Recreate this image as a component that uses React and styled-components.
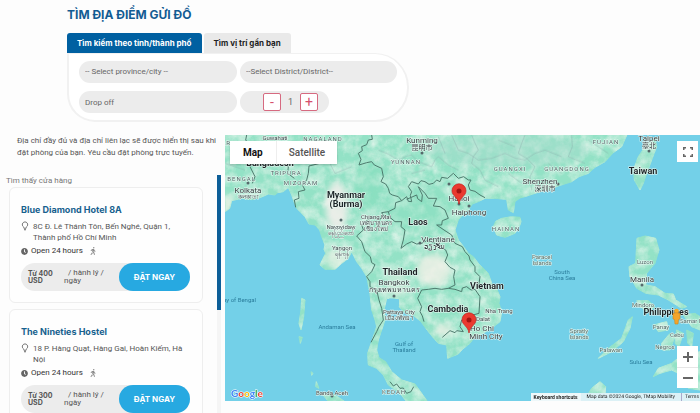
import { useState } from "react";
import styled, { createGlobalStyle, css } from "styled-components";
import { FaClock, FaWalking } from "react-icons/fa";

const stores = [
  {
    id: 1,
    name: "Blue Diamond Hotel 8A",
    address: "8C Đ. Lê Thánh Tôn, Bến Nghé, Quận 1, Thành phố Hồ Chí Minh",
    price: "Từ 400 USD",
  },
  {
    id: 2,
    name: "The Nineties Hostel",
    address: "18 P. Hàng Quạt, Hàng Gai, Hoàn Kiếm, Hà Nội",
    price: "Từ 300 USD",
  },
];

// kind, x, y, text, anchor
const labels = [
  ["country", 121, 60, "Myanmar"],
  ["country", 121, 69, "(Burma)"],
  ["country", 193, 87, "Laos"],
  ["country", 175, 137, "Thailand"],
  ["country", 223, 174, "Cambodia"],
  ["country", 262, 151, "Vietnam"],
  ["country", 418, 36, "Taiwan"],
  ["country", 441, 177, "Philippines"],
  ["country", 45, 28, "Bangladesh"],
  ["city", 197, 5, "Kunming"],
  ["native", 197, 13, "昆明市"],
  ["city", 315, 46, "Shenzhen"],
  ["native", 320, 54, "深圳市"],
  ["city", 424, 3, "Taipei"],
  ["native", 424, 11, "臺北"],
  ["city", 234, 63, "Hanoi"],
  ["city", 244, 77, "Haiphong"],
  ["city", 213, 104, "Vientiane"],
  ["native", 209, 112, "ວຽງຈັນ"],
  ["city", 169, 147, "Bangkok"],
  ["native", 169, 155, "กรุงเทพมหานคร"],
  ["city", 257, 193, "Ho Chi"],
  ["city", 261, 201, "Minh City"],
  ["city", 417, 144, "Manila"],
  ["city", 23, 55, "Kolkata"],
  ["town", 23, 61, "কলকাতা"],
  ["town", 50, 2, "Guwahati"],
  ["town", 151, 81, "Chiang Mai"],
  ["town", 151, 87, "เทศบาลนคร"],
  ["town", 151, 93, "เชียงใหม่"],
  ["town", 116, 91, "Naypyidaw"],
  ["town", 116, 97, "နေပြည်တော်"],
  ["town", 117, 112, "Yangon"],
  ["town", 117, 118, "ရန်ကုန်"],
  ["town", 174, 176, "Pattaya City"],
  ["town", 174, 182, "เมืองพัทยา"],
  ["town", 274, 175, "Nha Trang"],
  ["town", 258, 183, "Dalat"],
  ["town", 107, 257, "Banda Aceh"],
  ["island", 317, 121, "Paracel"],
  ["island", 317, 127, "Islands"],
  ["island", 354, 195, "Spratly"],
  ["island", 354, 201, "Islands"],
  ["island", 420, 126, "Luzon"],
  ["island", 418, 169, "Mindoro"],
  ["island", 436, 191, "Panay"],
  ["island", 452, 199, "Cebu"],
  ["island", 455, 185, "Samar Island", "start"],
  ["island", 440, 211, "Negros"],
  ["island", 386, 214, "Palawan"],
  ["region", 181, 26, "YUNNAN"],
  ["region", 285, 33, "GUANGXI"],
  ["region", 342, 33, "GUANGDONG"],
  ["region", 381, 6, "FUJIAN"],
  ["region", 281, 93, "HAINAN"],
  ["region", 98, 3, "NAGALAND"],
  ["region", 61, 37, "TRIPURA"],
  ["region", 76, 47, "MIZORAM"],
  ["region", 31, 43, "WEST BENGAL", "end"],
  ["region", 6, 7, "BIHAR", "end"],
  ["region", 169, 256, "KEDAH"],
  ["sea", 31, 164, "Bay of Bengal", "end"],
  ["sea", 112, 191, "Andaman Sea"],
  ["sea", 179, 208, "Gulf of"],
  ["sea", 179, 214, "Thailand"],
  ["sea", 337, 136, "South"],
  ["sea", 337, 142, "China Sea"],
  ["sea", 416, 226, "Sulu Sea"],
];

const land = [
  // mainland
  "M0 0V245L14 235 20 212 50 205 80 209 105 203 130 192 150 195 158 188 175 185 190 172 200 195 208 218 215 235 240 260 252 282 270 285 284 300 290 320 300 345 297 358 302 370 285 405 300 418 330 418 350 400 370 385 380 365 395 395 410 415 425 440 435 490 440 540 450 570 455 590 445 620 428 670 430 705 455 715 475 735 490 765 525 790 545 815H608L590 790 570 762 530 750 500 725 482 695 462 683 455 660 460 630 470 600 480 570 478 535 485 505 520 508 522 530 540 550 565 556 588 575 600 592 622 620 640 640 665 645 668 685 700 672 712 658 735 640 750 620 770 612 800 595 825 575 830 545 822 520 825 500 815 475 800 460 790 430 760 400 745 380 730 370 712 345 700 330 690 300 700 270 718 250 730 240 742 222 760 215 780 205 810 205 845 208 850 240 865 248 870 215 885 204 900 200 930 190 960 180 980 176 1000 168 1040 155 1062 140 1090 130 1110 112 1140 95 1165 68 1190 50 1212 0Z",
  // hainan, taiwan
  "M805 290L812 274 830 265 860 260 885 262 888 275 885 285 870 310 840 322 815 315Z",
  "M1245 180L1228 150 1225 120 1240 80 1260 50 1290 25 1295 50 1280 90 1265 130 1255 160Z",
  // philippines
  "M1236 325L1260 318 1292 325 1302 360 1290 400 1265 430 1262 465 1290 470 1320 490 1345 492 1352 510 1385 530 1370 535 1330 510 1300 495 1262 490 1235 475 1215 440 1212 410 1232 400Z",
  "M1235 512L1270 512 1290 530 1270 545 1245 530Z M1375 555L1410 550 1425 560V600L1400 590Z M1285 585L1325 575 1330 600 1300 605Z M1310 640L1335 610 1350 620 1335 660 1312 660Z M1355 600L1375 610 1362 650 1350 640Z M1385 600L1405 610 1400 650 1388 640Z",
  "M1120 685L1150 655 1190 625 1210 570 1222 560 1215 595 1195 635 1160 665Z",
  "M1285 740L1300 715 1340 700 1365 680 1425 665V780L1390 775 1380 740 1340 720 1305 730Z",
  // borneo, sumatra, andaman
  "M1075 815L1100 775 1125 755 1142 770 1140 792 1165 815Z",
  "M290 790L330 795 360 815H310Z M230 505L240 510 236 560 228 600 222 580 228 540Z M222 620L232 622 226 640Z M258 725L264 730 260 736Z M274 755L282 775 272 770Z",
];

const borders = [
  "M440 15L442 28 430 30 425 44 410 50 412 62 400 70 408 88 402 105 425 98 440 95 448 105 470 115 475 140 468 155 482 162 490 175 494 190 502 195 520 200 530 212 545 200 550 214 560 215 556 196 560 185 550 170 560 155 580 162 588 152 600 155 612 163 625 160 635 150 645 155 650 142 668 145 685 130 700 145 716 140 730 150 738 150 730 165 735 180 750 184 765 195 780 203",
  "M530 212L512 218 510 235 490 245 470 248 478 262 462 268 440 262 428 270 410 285 415 300 395 318 410 335 420 365 436 380 440 398 450 404 440 425 425 440 435 455 435 470 455 480 462 510 470 535 475 570 462 590 455 605 438 637",
  "M545 208L575 195 578 206 590 215 592 195 580 170 600 190 610 205 635 205 625 228 645 230 660 240 670 265 652 272 650 285 635 285 660 302 680 315 690 340 712 350 720 365 732 378 735 390 750 410 750 425 765 440 760 475",
  "M490 245L495 262 510 275 530 275 528 290 540 300 535 330 528 355 545 342 560 335 575 342 590 340 605 332 620 335 640 345 662 360 668 375 660 395 675 412 690 420 686 440 690 465 670 475 690 478 710 485 712 474 725 470 738 480 750 478",
  "M597 575L592 558 585 545 590 530 578 505 590 480 610 478 630 475 650 478 670 475 M750 478L765 500 762 550 740 556 725 572 710 570 705 590 715 605 695 602 690 608 675 602 652 622",
  "M285 100L252 108 250 130 245 150 232 165 240 180 220 185 222 205 208 210 212 232 M65 15L62 30 75 45 72 60 82 90 75 110 90 140 82 160 M180 100L190 110 188 130 208 145",
  "M495 755L505 768 515 762 525 775 535 774 545 790 558 785 566 770",
];

const dots = [[197, 18], [224, 49], [424, 16], [234, 69], [244, 71], [116, 85], [195, 108], [169, 161], [417, 150], [23, 48], [107, 261], [333, 49]];

const provinceLines =
  "M460 60L490 72 520 90 545 78 560 75 580 95 620 110 630 90 640 80 670 105 700 120 M740 15L748 35 760 60 745 80 740 100 765 120 780 150 820 170 M900 15L890 40 880 70 905 85 930 110 915 140 920 180 M1040 15L1042 50 1030 80 1080 100 M680 15L700 60 730 70 760 90 800 85 840 70 870 84 900 90 930 70 960 60 1010 80 M640 20L660 70 M820 30L870 50 M970 100L1010 130 M1090 30L1150 70 M560 130L600 120 M850 130L890 160 M300 70L330 130 380 110 M0 100L60 120 M110 60L160 80";

function StoreMap() {
  return (
    <MapDrawing viewBox="0 0 475 266" preserveAspectRatio="xMinYMin slice" role="img" aria-label="Map of stores">
      <defs>
        <filter id="relief" x="0" y="0" width="100%" height="100%" colorInterpolationFilters="sRGB">
          <feTurbulence type="fractalNoise" baseFrequency="0.03" numOctaves="5" seed="8" result="noise" />
          <feColorMatrix in="noise" type="matrix" values="0 0 0 0 0.84  0 0 0 0 0.95  0 0 0 0 0.9  1.8 0 0 0 -0.6" result="light" />
          <feComposite in="light" in2="SourceAlpha" operator="in" result="shade" />
          <feMerge>
            <feMergeNode in="SourceGraphic" />
            <feMergeNode in="shade" />
          </feMerge>
        </filter>
        <filter id="soft">
          <feGaussianBlur stdDeviation="10" />
        </filter>
        <clipPath id="coast">
          <path d={land[0]} />
        </clipPath>
      </defs>
      <rect width="475" height="266" fill="#73d0e8" />
      <g transform="translate(0 -5) scale(.33333)">
        <g filter="url(#relief)" fill="#93e2c6" stroke="#93e2c6" strokeWidth="3">
          {land.map((d) => <path key={d} d={d} strokeLinejoin="round" />)}
        </g>
        <g clipPath="url(#coast)">
          <g filter="url(#soft)">
            <ellipse cx="335" cy="230" rx="34" ry="75" fill="#f0eeea" opacity=".9" />
            <ellipse cx="335" cy="385" rx="35" ry="30" fill="#edf2e6" opacity=".7" />
            <ellipse cx="625" cy="420" rx="52" ry="48" fill="#eef0e6" opacity=".85" />
            <ellipse cx="515" cy="460" rx="35" ry="40" fill="#dceee0" opacity=".6" />
            <ellipse cx="655" cy="600" rx="25" ry="20" fill="#eef0e6" opacity=".8" />
            <ellipse cx="5" cy="225" rx="20" ry="30" fill="#edf2e6" opacity=".8" />
            <ellipse cx="580" cy="240" rx="110" ry="60" fill="#86dfbf" opacity=".4" />
            <ellipse cx="430" cy="160" rx="40" ry="80" fill="#7edcb8" opacity=".4" />
            <ellipse cx="850" cy="60" rx="240" ry="50" fill="#a5dccb" opacity=".5" />
          </g>
          <path d={provinceLines} fill="none" stroke="#8caaa8" strokeWidth="2" opacity=".6" />
        </g>
        <path d="M493 505L522 508 522 530 494 527Z" fill="#73d0e8" />
        {borders.map((d) => (
          <path key={d} d={d} fill="none" stroke="#4d7a6d" strokeWidth="3" strokeLinejoin="round" />
        ))}
      </g>
      {dots.map(([x, y]) => (
        <circle key={`${x}-${y}`} cx={x} cy={y} r="1.5" fill="#56696b" />
      ))}
      {labels.map(([kind, x, y, text, anchor = "middle"]) => (
        <MapLabel key={`${x}-${y}`} $kind={kind} x={x} y={y} textAnchor={anchor}>{text}</MapLabel>
      ))}
      <Marker x={234} y={69} />
      <Marker x={244} y={198} />
      <g transform="translate(451.500 182)">
        <circle cy="-6" r="2.300" fill="#f7a928" />
        <path d="M-3.500-3.500Q0-5 3.500-3.500L3.500 2 2 2.500 1.500 7H-1.500L-2 2.500-3.500 2Z" fill="#f3a52c" stroke="#d58819" strokeWidth=".6" />
      </g>
      <GoogleMark x="6" y="262">
        <tspan fill="#4285f4">G</tspan>
        <tspan fill="#ea4335">o</tspan>
        <tspan fill="#fbbc05">o</tspan>
        <tspan fill="#4285f4">g</tspan>
        <tspan fill="#34a853">l</tspan>
        <tspan fill="#ea4335">e</tspan>
      </GoogleMark>
    </MapDrawing>
  );
}

function Marker({ x, y }) {
  return (
    <g transform={`translate(${x} ${y})`}>
      <path d="M0 0C-1-7-7-8-7-13.200A7 7 0 0 1 7-13.200C7-8 1-7 0 0Z" fill="#ea3a30" stroke="#c5221f" strokeWidth=".7" />
      <circle cy="-13" r="2.500" fill="#a31512" />
    </g>
  );
}

function StoreCard({ store }) {
  return (
    <Card>
      <StoreName>{store.name}</StoreName>
      <Address>
        <svg width="8" height="10" viewBox="0 0 8 10" fill="none" stroke="#777">
          <path d="M4 9.300L2.700 6A2.700 2.700 0 1 1 5.300 6Z" />
        </svg>
        <span>{store.address}</span>
      </Address>
      <Hours>
        <FaClock size={7} color="#666" />
        <span>Open 24 hours</span>
        <FaWalking size={8} color="#888" />
      </Hours>
      <Booking>
        <Price>{store.price}</Price>
        <Unit>&nbsp;&nbsp;/ hành lý / ngày</Unit>
        <BookButton type="button">ĐẶT NGAY</BookButton>
      </Booking>
    </Card>
  );
}

export default function App() {
  const [tab, setTab] = useState("province");
  const [bags, setBags] = useState(1);

  return (
    <Page>
      <GlobalStyle />
      <Search>
        <Title>TÌM ĐỊA ĐIỂM GỬI ĐỒ</Title>
        <Tabs>
          <Tab type="button" $active={tab === "province"} onClick={() => setTab("province")}>
            Tìm kiếm theo tỉnh/thành phố
          </Tab>
          <Tab type="button" $active={tab === "near"} onClick={() => setTab("near")}>
            Tìm vị trí gần bạn
          </Tab>
        </Tabs>
        <Form>
          <Select aria-label="Province/city">
            <option>-- Select province/city --</option>
          </Select>
          <Select aria-label="District">
            <option>--Select District/District--</option>
          </Select>
          <Input aria-label="Drop off" placeholder="Drop off" />
          <Counter>
            <StepButton type="button" aria-label="Fewer" onClick={() => setBags(Math.max(1, bags - 1))}>-</StepButton>
            <span>{bags}</span>
            <StepButton type="button" aria-label="More" onClick={() => setBags(bags + 1)}>+</StepButton>
          </Counter>
        </Form>
      </Search>

      <Content>
        <Sidebar>
          <Notice>Địa chỉ đầy đủ và địa chỉ liên lạc sẽ được hiển thị sau khi đặt phòng của bạn. Yêu cầu đặt phòng trực tuyến.</Notice>
          <Results>
            <List>
              <Found>Tìm thấy cửa hàng</Found>
              {stores.map((store) => <StoreCard key={store.id} store={store} />)}
            </List>
            <Track><Thumb /></Track>
          </Results>
        </Sidebar>
        <MapPanel>
          <StoreMap />
          <MapTypes>
            <MapType type="button" $active>Map</MapType>
            <MapType type="button">Satellite</MapType>
          </MapTypes>
          <Fullscreen type="button" aria-label="Fullscreen">
            <svg width="10" height="10" viewBox="0 0 10 10" fill="none" stroke="#666" strokeWidth="1.500">
              <path d="M.75 3V.75H3M7 .75H9.250V3M9.250 7V9.250H7M3 9.250H.75V7" />
            </svg>
          </Fullscreen>
          <Zoom>
            <ZoomButton type="button" aria-label="Zoom in">
              <svg width="10" height="10" viewBox="0 0 10 10" stroke="#666" strokeWidth="2"><path d="M0 5H10M5 0V10" /></svg>
            </ZoomButton>
            <ZoomButton type="button" aria-label="Zoom out">
              <svg width="10" height="10" viewBox="0 0 10 10" stroke="#666" strokeWidth="2"><path d="M0 5H10" /></svg>
            </ZoomButton>
          </Zoom>
          <Credits>
            <Shortcuts type="button">Keyboard shortcuts</Shortcuts>
            <span>Map data ©2024 Google, TMap Mobility</span>
            <a href="#terms">Terms</a>
          </Credits>
        </MapPanel>
      </Content>
    </Page>
  );
}

const GlobalStyle = createGlobalStyle`
  * {
    box-sizing: border-box;
  }
  body {
    margin: 0;
    background: #fdfdfd;
    color: #555;
    font-family: Roboto, "Noto Sans", sans-serif;
    font-size: 8px;
    line-height: 12px;
  }
  button, input, select {
    margin: 0;
    padding: 0;
    border: 0;
    font: inherit;
    color: inherit;
  }
  button {
    cursor: pointer;
  }
`

const heading = css`
  font-family: Inter, "Noto Sans", sans-serif;
  font-weight: 700;
`

const Page = styled.main`
  display: flex;
  flex-direction: column;
  height: 100vh;
  overflow: hidden;
`

const Search = styled.section`
  width: 342px;
  margin-left: 67px;
  padding-top: 8px;
`

const Title = styled.h1`
  ${heading}
  margin: 0 0 11px;
  color: #135c93;
  font-size: 12px;
  line-height: 14px;
`

const Tabs = styled.div`
  display: flex;
  gap: 2px;
`

const Tab = styled.button`
  ${heading}
  height: 20px;
  padding: 0 10px;
  border-radius: 3px 3px 0 0;
  background: #e9e9e9;
  color: #222;
  white-space: nowrap;

  ${({ $active }) => $active && css`
    background: #0060a1;
    color: #fff;
  `}
`

const Form = styled.form`
  display: grid;
  grid-template-columns: 158px 157px;
  gap: 8px 3px;
  padding: 7px 10px;
  border: 2px solid #f1f1f1;
  border-top-width: 1px;
  border-radius: 0 34px 34px 28px;
  background: #fff;
`

const field = css`
  height: 22px;
  padding: 0 6px;
  border-radius: 11px;
  background: #ececec;
  color: #666;
`

const Select = styled.select`
  ${field}
  appearance: none;
`

const Input = styled.input`
  ${field}
  min-width: 0;

  &::placeholder {
    color: #666;
  }
`

const Counter = styled.div`
  ${field}
  display: flex;
  align-items: center;
  justify-content: center;
  gap: 7px;
  width: 89px;
  padding-left: 18px;
  font-size: 9px;
`

const StepButton = styled.button`
  display: flex;
  align-items: center;
  justify-content: center;
  width: 18px;
  height: 18px;
  flex: none;
  padding-bottom: 1px;
  border: 1px solid #d66a80;
  border-radius: 2px;
  background: #fff;
  color: #d6506c;
  font-size: 14px;
  line-height: 14px;
`

const Content = styled.div`
  display: flex;
  align-items: flex-start;
  flex: 1;
  min-height: 0;
  padding-top: 13px;
`

const Sidebar = styled.aside`
  display: flex;
  flex-direction: column;
  flex: none;
  width: 225px;
  height: 100%;
`

const Notice = styled.p`
  margin: 0;
  padding-left: 17px;
`

const Results = styled.div`
  display: flex;
  justify-content: space-between;
  flex: 1;
  min-height: 0;
  margin-top: 16px;
  padding-right: 4px;
`

const List = styled.div`
  width: 203px;
  overflow: hidden;
`

const Found = styled.div`
  padding-left: 6px;
  color: #777;
`

const Track = styled.div`
  width: 4px;
  background: #f5f5f5;
`

const Thumb = styled.div`
  height: 135px;
  background: #0d5f98;
`

const Card = styled.article`
  margin: 0 0 6px 9px;
  padding: 16px 12px 11px 11px;
  border: 1px solid #eee;
  border-radius: 6px;
  background: #fefefe;
`

const StoreName = styled.h2`
  ${heading}
  margin: 0 0 5px;
  color: #17618e;
  font-size: 9px;
  line-height: 12px;
`

const Address = styled.div`
  display: flex;
  gap: 4px;
  line-height: 11px;

  svg {
    flex: none;
  }
`

const Hours = styled.div`
  display: flex;
  align-items: center;
  gap: 3px;
  margin: 2px 0 6px;
  color: #333;

  span {
    margin-right: 3px;
  }
`

const Booking = styled.div`
  display: flex;
  align-items: center;
  height: 28px;
  padding-left: 7px;
  border-radius: 14px;
  background: #ececec;
  line-height: 8px;
`

const Price = styled.strong`
  ${heading}
  width: 36px;
  font-size: 7px;
  line-height: 7px;
  padding-right: 6px;
`

const Unit = styled.span`
  flex: 1;
  padding-right: 8px;
`

const BookButton = styled.button`
  ${heading}
  width: 71px;
  height: 28px;
  border-radius: 14px;
  background: #27a9e1;
  color: #fff;
`

const MapPanel = styled.section`
  position: relative;
  flex: 1;
  min-width: 0;
  height: 266px;
  overflow: hidden;
`

const MapDrawing = styled.svg`
  display: block;
  width: 100%;
  height: 100%;
`

const labelKinds = {
  country: css`
    font-size: 9px;
    font-weight: 700;
    fill: #1d2528;
  `,
  city: css`
    font-size: 8px;
    fill: #333d40;
  `,
  native: css`
    font-size: 7px;
    fill: #333d40;
  `,
  town: css`
    font-size: 6px;
    fill: #3d484b;
  `,
  island: css`
    font-size: 6px;
    fill: #4e6a68;
  `,
  region: css`
    font-size: 6px;
    letter-spacing: 1px;
    fill: #4c6463;
  `,
  sea: css`
    font-size: 6px;
    fill: #2a7d9c;
    stroke: none;
  `,
}

const MapLabel = styled.text`
  font-family: Roboto, "Noto Sans", "Noto Sans CJK SC", sans-serif;
  dominant-baseline: central;
  paint-order: stroke;
  stroke: #e9f8f2;
  stroke-width: 1px;
  ${({ $kind }) => labelKinds[$kind]}
`

const GoogleMark = styled.text`
  font-family: Lato, sans-serif;
  font-size: 10px;
  font-weight: 700;
  paint-order: stroke;
  stroke: #fff;
  stroke-width: 1px;
`

const MapTypes = styled.div`
  position: absolute;
  top: 6px;
  left: 5px;
  display: flex;
  background: #fff;
  box-shadow: 0 1px 2px rgba(0, 0, 0, 0.2);
`

const MapType = styled.button`
  height: 23px;
  padding: 0 13px;
  background: #fff;
  color: ${({ $active }) => ($active ? "#111" : "#555")};
  font-size: 10px;
  font-weight: ${({ $active }) => ($active ? 700 : 500)};

  & + & {
    padding: 0 12px;
    border-left: 1px solid #eee;
  }
`

const Fullscreen = styled.button`
  position: absolute;
  top: 6px;
  right: 2px;
  display: grid;
  place-items: center;
  width: 21px;
  height: 21px;
  background: #fff;
`

const Zoom = styled.div`
  position: absolute;
  right: 2px;
  bottom: 13px;
  width: 21px;
  background: #fff;
`

const ZoomButton = styled.button`
  display: grid;
  place-items: center;
  width: 21px;
  height: 21px;
  background: #fff;

  & + & {
    border-top: 1px solid #e6e6e6;
  }
`

const Credits = styled.div`
  position: absolute;
  right: 0;
  bottom: 0;
  display: flex;
  height: 8px;
  overflow: hidden;
  background: #dcf1f6;
  color: #222;
  font-size: 5px;
  line-height: 8px;
  text-rendering: geometricPrecision;
  white-space: nowrap;

  span {
    padding: 0 6px;
  }
  a {
    padding: 0 1px 0 3px;
    border-left: 1px solid #aac;
    color: inherit;
    text-decoration: none;
  }
`

const Shortcuts = styled.button`
  padding: 0 3px;
  background: #eef8fa;
  font-weight: 700;
`
